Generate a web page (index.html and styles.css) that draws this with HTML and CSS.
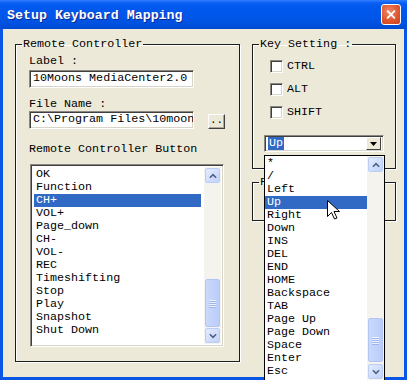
FILE: index.html
```html
<!DOCTYPE html>
<html lang="en">
<head>
  <meta charset="UTF-8" />
  <title>Setup Keyboard Mapping</title>
  <link rel="stylesheet" href="styles.css">
</head>
<body>

  <div class="window">
    <div class="titlebar">
      <span class="title">Setup Keyboard Mapping</span>
      <span class="close">
        <svg viewBox="0 0 21 21" aria-hidden="true"><path d="M6 6L15 15M15 6L6 15"/></svg>
      </span>
    </div>

    <div class="client">
      <fieldset class="group remote">
        <legend>Remote Controller</legend>
        <div class="group-body">
          <div class="field-label first">Label :</div>
          <div class="textbox">10Moons MediaCenter2.0</div>
          <div class="field-label">File Name :</div>
          <div class="file-row">
            <div class="textbox">C:\Program Files\10moon</div>
            <span class="browse">..</span>
          </div>
          <div class="field-label list-label">Remote Controller Button</div>
          <div class="listbox sunken">
            <ul class="items">
              <li>OK</li>
              <li>Function</li>
              <li class="selected">CH+</li>
              <li>VOL+</li>
              <li>Page_down</li>
              <li>CH-</li>
              <li>VOL-</li>
              <li>REC</li>
              <li>Timeshifting</li>
              <li>Stop</li>
              <li>Play</li>
              <li>Snapshot</li>
              <li>Shut Down</li>
            </ul>
            <div class="scrollbar">
              <span class="sb-btn"><svg viewBox="0 0 9 6"><path d="M1 5L4.5 1.5L8 5"/></svg></span>
              <span class="sb-track list-track"><span class="sb-thumb"><i></i><i></i><i></i><i></i></span></span>
              <span class="sb-btn"><svg viewBox="0 0 9 6"><path d="M1 1L4.5 4.5L8 1"/></svg></span>
            </div>
          </div>
        </div>
      </fieldset>

      <div class="side">
        <fieldset class="group keys">
          <legend>Key Setting :</legend>
          <div class="group-body">
            <div class="check"><span class="box"></span>CTRL</div>
            <div class="check"><span class="box"></span>ALT</div>
            <div class="check"><span class="box"></span>SHIFT</div>

            <div class="combo">
              <div class="combo-field sunken">
                <span class="combo-value">Up</span>
                <span class="combo-btn"><svg viewBox="0 0 7 4"><path d="M0 0H7L3.5 4Z"/></svg></span>
              </div>

              <div class="dropdown">
                <ul class="items">
                  <li>*</li>
                  <li>/</li>
                  <li>Left</li>
                  <li class="selected">Up</li>
                  <li>Right</li>
                  <li>Down</li>
                  <li>INS</li>
                  <li>DEL</li>
                  <li>END</li>
                  <li>HOME</li>
                  <li>Backspace</li>
                  <li>TAB</li>
                  <li>Page Up</li>
                  <li>Page Down</li>
                  <li>Space</li>
                  <li>Enter</li>
                  <li>Esc</li>
                </ul>
                <div class="scrollbar">
                  <span class="sb-btn"><svg viewBox="0 0 9 6"><path d="M1 5L4.5 1.5L8 5"/></svg></span>
                  <span class="sb-track drop-track"><span class="sb-thumb"><i></i><i></i><i></i><i></i></span></span>
                  <span class="sb-btn"><svg viewBox="0 0 9 6"><path d="M1 1L4.5 4.5L8 1"/></svg></span>
                </div>
                <svg class="cursor" viewBox="0 0 13 20" aria-hidden="true">
                  <path d="M0.5 0.5V16.5L4.5 12.5L7.5 19L10 18L7 11.5H12.5Z"/>
                </svg>
              </div>
            </div>
          </div>
        </fieldset>

        <fieldset class="group function">
          <legend>F</legend>
        </fieldset>
      </div>
    </div>
  </div>

</body>
</html>
```

FILE: styles.css
```css
* {
  box-sizing: border-box;
}

html, body {
  margin: 0;
  height: 100%;
  overflow: hidden;
  background: #ece9d8;
}

body {
  font-family: "Liberation Mono", "DejaVu Sans Mono", monospace;
  font-size: 11.7px;
  line-height: 13px;
  color: #000;
}

.window {
  width: 407px;
  height: 380px;
  display: flex;
  flex-direction: column;
  background: #0a56e4;
}

.titlebar {
  height: 29px;
  flex: none;
  display: flex;
  align-items: center;
  justify-content: space-between;
  padding: 0 6px 0 7px;
  background: linear-gradient(to bottom, #2f7dff 0, #0a5ff2 3px, #0058ee 8px, #0056e8 18px, #0050dc 25px, #0049d2 29px);
}

.title {
  color: #fff;
  font-weight: bold;
  font-size: 13.3px;
  text-shadow: 1px 1px 0 #0b2a8a;
  margin-top: 1px;
}

.close {
  width: 20px;
  height: 21px;
  border: 1px solid #fff;
  border-radius: 3px;
  background: radial-gradient(circle at 40% 35%, #ef8a6b 0, #e0572f 55%, #c7401e 100%);
  display: flex;
}

.close svg {
  width: 100%;
  height: 100%;
  stroke: #fff;
  stroke-width: 2.2;
  fill: none;
}

.client {
  flex: 1;
  margin: 0 3px 3px;
  background: #ece9d8;
  display: flex;
  align-items: flex-start;
  gap: 12px;
  padding-left: 12px;
}

.group {
  margin: 9px 0 0;
  padding: 0;
  border: 1px solid #1c1c1c;
  box-shadow: 1px 1px 0 #fff, inset 1px 1px 0 #fff;
  min-width: 0;
}

.group legend {
  margin-left: 6px;
  padding: 0 1px;
}

.group-body {
  padding: 2px 0 14px 13px;
}

/* left group */

.remote {
  width: 225px;
}

.field-label {
  margin-top: 10px;
}

.field-label.first {
  margin-top: 2px;
}

.textbox {
  width: 165px;
  height: 18px;
  margin-top: 2px;
  padding: 1px 0 0 3px;
  background: #fff;
  white-space: nowrap;
  overflow: hidden;
  border-top: 1px solid #8a8780;
  border-left: 1px solid #8a8780;
  border-bottom: 1px solid #fff;
  border-right: 1px solid #fff;
  box-shadow: inset 1px 1px 0 #3f3f3f, inset -1px -1px 0 #d8d4c8;
}

.file-row {
  display: flex;
  align-items: flex-end;
  gap: 14px;
}

.file-row .textbox {
  margin-top: 0;
}

.browse {
  width: 17px;
  height: 15px;
  background: #ece9d8;
  border-top: 1px solid #fff;
  border-left: 1px solid #fff;
  border-right: 1px solid #404040;
  border-bottom: 1px solid #404040;
  box-shadow: inset -1px -1px 0 #aca899;
  text-align: center;
  line-height: 10px;
  font-size: 11px;
}

.list-label {
  margin-top: 14px;
}

.sunken {
  background: #fff;
  border-top: 1px solid #8a8780;
  border-left: 1px solid #8a8780;
  border-bottom: 1px solid #fff;
  border-right: 1px solid #fff;
  box-shadow: inset 1px 1px 0 #3f3f3f, inset -1px -1px 0 #d8d4c8;
}

.listbox {
  width: 194px;
  height: 183px;
  margin: 8px 0 0 1px;
  padding: 2px;
  display: flex;
}

.items {
  list-style: none;
  margin: 0;
  padding: 1px 3px 0 1px;
  flex: 1;
  white-space: nowrap;
  overflow: hidden;
}

.items li {
  height: 13px;
  padding-left: 2px;
}

.items li.selected {
  background: #316ac5;
  color: #fff;
}

/* scrollbars */

.scrollbar {
  width: 17px;
  flex: none;
  display: flex;
  flex-direction: column;
  background: #f4f3ee;
}

.sb-btn {
  width: 15px;
  height: 15px;
  margin: 1px;
  flex: none;
  border: 1px solid #bccdf5;
  border-radius: 2px;
  background: linear-gradient(135deg, #e3ebfe, #c1d3fb);
  display: flex;
  align-items: center;
  justify-content: center;
}

.sb-btn svg {
  width: 8px;
  height: 6px;
  fill: none;
  stroke: #4d6185;
  stroke-width: 1.8;
}

.sb-track {
  flex: 1;
  display: flex;
  flex-direction: column;
  justify-content: flex-end;
}

.sb-thumb {
  margin: 0 1px;
  border: 1px solid #b3c6f3;
  border-radius: 2px;
  background: linear-gradient(to right, #c9d8fc, #bacdfa);
  display: flex;
  flex-direction: column;
  align-items: center;
  justify-content: center;
  gap: 1px;
}

.sb-thumb i {
  width: 7px;
  height: 1px;
  background: #eef3fe;
  box-shadow: 0 1px 0 #9db4ec;
}

.list-track .sb-thumb {
  height: 48px;
}

.drop-track .sb-thumb {
  height: 44px;
  margin-bottom: 1px;
}

/* right column */

.side {
  width: 144px;
  display: flex;
  flex-direction: column;
  gap: 7px;
}

.side .group {
  margin-top: 9px;
}

.side .function {
  margin-top: 0;
  height: 45px;
}

.keys .group-body {
  padding: 9px 0 16px 11px;
}

.check {
  display: flex;
  align-items: center;
  height: 13px;
  margin-bottom: 10px;
  padding-left: 6px;
}

.box {
  width: 13px;
  height: 13px;
  margin-right: 4px;
  background: #fff;
  border-top: 1px solid #8a8780;
  border-left: 1px solid #8a8780;
  border-bottom: 1px solid #fff;
  border-right: 1px solid #fff;
  box-shadow: inset 1px 1px 0 #3f3f3f, inset -1px -1px 0 #d8d4c8;
}

.combo {
  position: relative;
  width: 120px;
  margin-top: 16px;
}

.combo-field {
  height: 17px;
  display: flex;
  align-items: center;
  padding: 2px;
}

.combo-value {
  background: #316ac5;
  color: #fff;
  padding: 0 1px;
  margin-left: 1px;
  height: 13px;
}

.combo-btn {
  margin-left: auto;
  width: 15px;
  height: 13px;
  background: #ece9d8;
  border-top: 1px solid #fff;
  border-left: 1px solid #fff;
  border-right: 1px solid #404040;
  border-bottom: 1px solid #404040;
  display: flex;
  align-items: center;
  justify-content: center;
}

.combo-btn svg {
  width: 7px;
  height: 4px;
  fill: #000;
}

.dropdown {
  position: absolute;
  top: 20px;
  left: 0;
  width: 121px;
  height: 226px;
  background: #fff;
  border: 1px solid #000;
  display: flex;
  z-index: 2;
}

.dropdown .items {
  padding: 1px 0 0 0;
}

.cursor {
  position: absolute;
  left: 62px;
  top: 44px;
  width: 13px;
  height: 20px;
  fill: #fff;
  stroke: #000;
  stroke-width: 1;
}
```
